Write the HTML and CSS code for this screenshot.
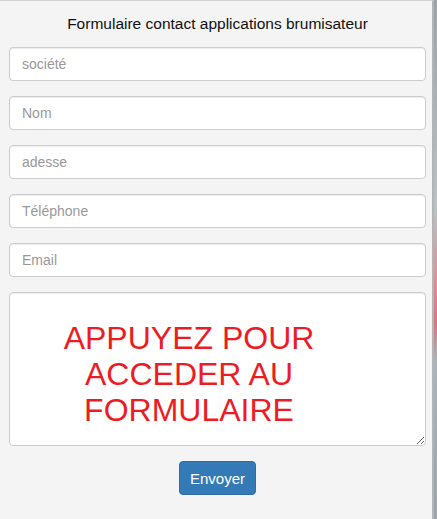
FILE: index.html
```html
<!DOCTYPE html>
<html lang="fr">
<head>
<meta charset="utf-8">
<title>Formulaire contact</title>
<link rel="stylesheet" href="styles.css">
</head>
<body>
<div class="panel">
  <h1 class="title">Formulaire contact applications brumisateur</h1>
  <form class="form">
    <input class="field" type="text" placeholder="société">
    <input class="field" type="text" placeholder="Nom">
    <input class="field" type="text" placeholder="adesse">
    <input class="field" type="text" placeholder="Téléphone">
    <input class="field" type="text" placeholder="Email">
    <div class="area-wrap">
      <textarea class="area"></textarea>
      <div class="overlay">APPUYEZ POUR<br>ACCEDER AU<br>FORMULAIRE</div>
    </div>
    <div class="actions">
      <button class="btn" type="button">Envoyer</button>
    </div>
  </form>
</div>
</body>
</html>
```
FILE: styles.css
```css
html, body {
  margin: 0;
  padding: 0;
  height: 100%;
}
body {
  font-family: "Liberation Sans", Arial, sans-serif;
  background: linear-gradient(to bottom, #9aa3a8 0%, #b9c3c6 40%, #d98b93 56%, #d07a86 62%, #a8b6bb 70%, #9aa4aa 100%);
  overflow: hidden;
}
.panel {
  width: 434px;
  height: 519px;
  box-sizing: border-box;
  background: #f4f4f4;
  border-top: 1px solid #d2d2d2;
  border-right: 2px solid #b4b4b4;
  padding: 0 6px 0 9px;
}
.title {
  margin: 0 0 12px;
  padding-top: 12px;
  height: 22px;
  line-height: 22px;
  font-size: 15.5px;
  font-weight: normal;
  color: #111;
  text-align: center;
}
.form {
  display: flex;
  flex-direction: column;
  gap: 15px;
}
.field {
  display: block;
  width: 100%;
  height: 34px;
  box-sizing: border-box;
  padding: 6px 12px;
  font-family: "Liberation Sans", Arial, sans-serif;
  font-size: 14px;
  color: #555;
  background: #fff;
  border: 1px solid #ccc;
  border-radius: 4px;
  box-shadow: inset 0 1px 1px rgba(0,0,0,.075);
  outline: none;
}
.field::placeholder {
  color: #999;
}
.area-wrap {
  position: relative;
  height: 154px;
}
.area {
  display: block;
  width: 100%;
  height: 154px;
  box-sizing: border-box;
  border: 1px solid #ccc;
  border-radius: 4px;
  box-shadow: inset 0 1px 1px rgba(0,0,0,.075);
  background: #fff;
  resize: both;
  outline: none;
}
.overlay {
  position: absolute;
  left: 40px;
  top: 28px;
  width: 280px;
  text-align: center;
  font-size: 32px;
  line-height: 36px;
  color: #ed1c24;
  pointer-events: none;
}
.actions {
  display: flex;
  justify-content: center;
}
.btn {
  width: 77px;
  height: 34px;
  padding: 0;
  font-family: "Liberation Sans", Arial, sans-serif;
  font-size: 15px;
  color: #fff;
  background: #337ab7;
  border: 1px solid #2e6da4;
  border-radius: 4px;
  cursor: pointer;
}
```
